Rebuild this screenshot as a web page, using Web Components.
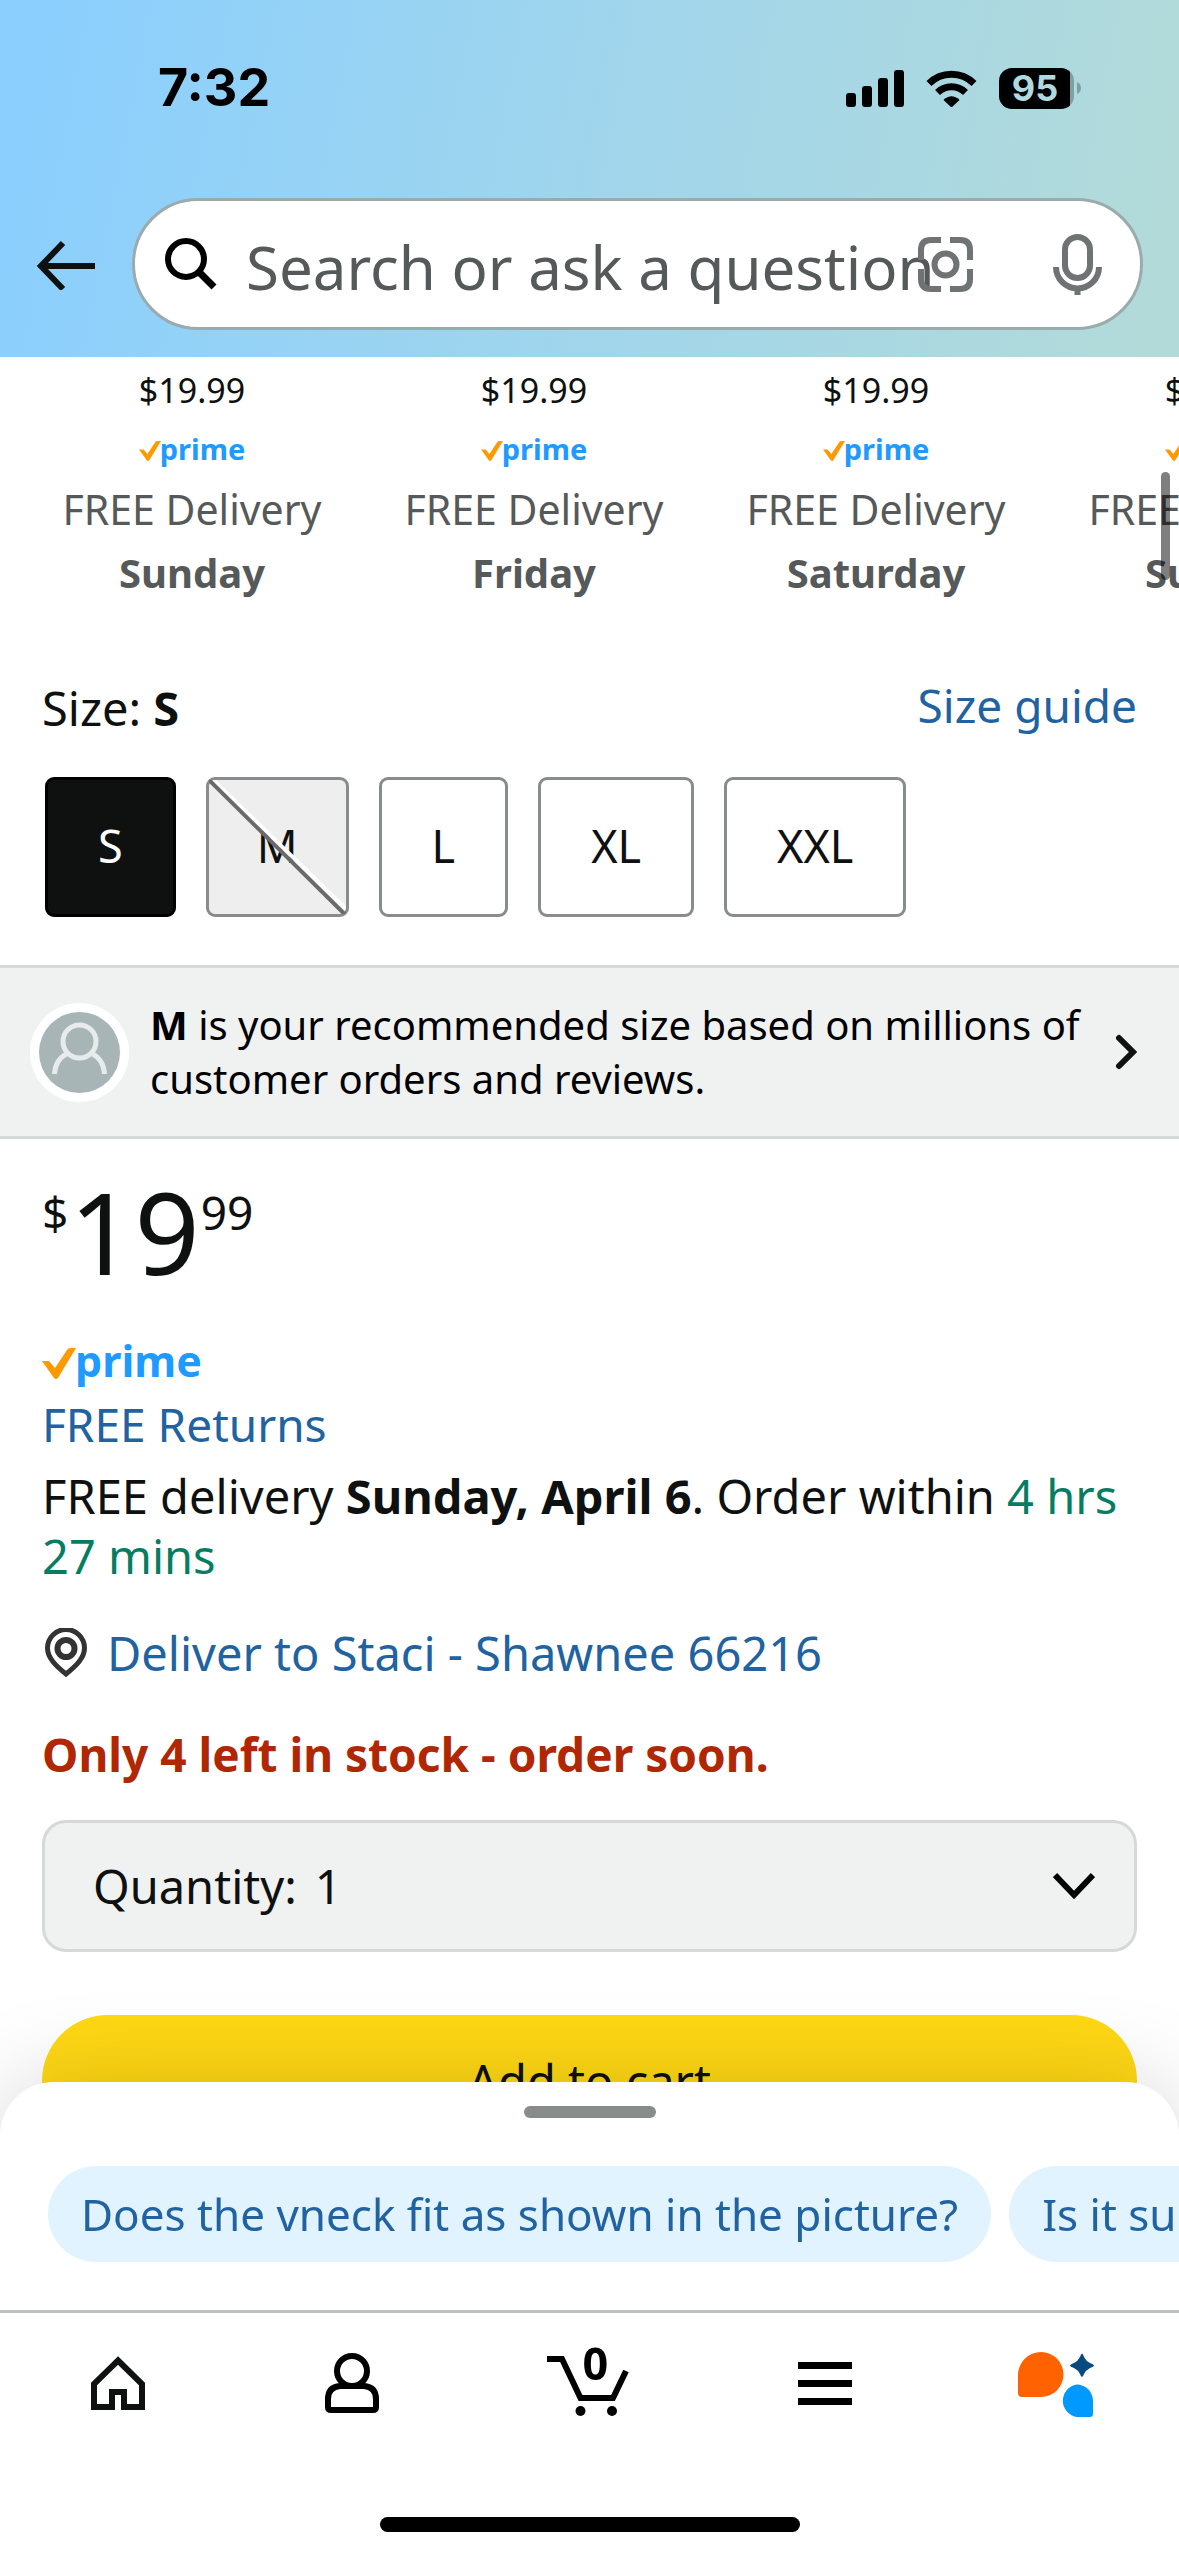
<!DOCTYPE html>
<html lang="en">
<head>
<meta charset="utf-8">
<meta name="viewport" content="width=device-width, initial-scale=1">
<title>Product details</title>
<style>
  body { margin: 0; font-family: "Noto Sans", "Open Sans", sans-serif; font-size: 47px; line-height: 60px; color: #0f1111; background: #fff; }
</style>
</head>
<body>
<app-shell>
  <app-header slot="header"></app-header>
  <swatch-strip>
    <swatch-offer price="$19.99" day="Sunday"></swatch-offer>
    <swatch-offer price="$19.99" day="Friday"></swatch-offer>
    <swatch-offer price="$19.99" day="Saturday"></swatch-offer>
    <swatch-offer price="$19.99" day="Sunday"></swatch-offer>
  </swatch-strip>
  <size-picker>
    <size-option selected>S</size-option>
    <size-option unavailable>M</size-option>
    <size-option>L</size-option>
    <size-option>XL</size-option>
    <size-option>XXL</size-option>
  </size-picker>
  <fit-banner><b>M</b> is your recommended size based on millions of customer orders and reviews.</fit-banner>
  <buy-box></buy-box>
  <scroll-thumb slot="overlay"></scroll-thumb>
  <bottom-dock slot="overlay">
    <question-chip>Does the vneck fit as shown in the picture?</question-chip>
    <question-chip>Is it suitable for work?</question-chip>
  </bottom-dock>
</app-shell>

<script>
const define = (name, render) => customElements.define(name, class extends HTMLElement {
  constructor() { super(); this.attachShadow({ mode: 'open' }); }
  connectedCallback() {
    this.shadowRoot.innerHTML = '<style>*{box-sizing:border-box}svg{display:block;flex:none}button{font:inherit;color:inherit;border:0;padding:0;margin:0;background:none}a{color:#2162a1;text-decoration:none}</style>' + render(this);
  }
});

define('app-shell', () => `
  <style>
    :host { display: flex; flex-direction: column; height: 100vh; overflow: hidden; }
    main { flex: 1; min-height: 0; overflow: hidden; }
  </style>
  <slot name="header"></slot><main><slot></slot></main><slot name="overlay"></slot>`);

define('status-bar', () => `
  <style>
    :host { display: flex; align-items: center; justify-content: space-between; height: 68px; padding: 0 98px 0 158px; color: #000; font: 700 52px/68px Inter, sans-serif; }
    .icons { display: flex; align-items: center; gap: 22px; }
    .battery { display: flex; align-items: center; gap: 3px; }
    .cell { width: 75px; height: 41px; border-radius: 13px; background: linear-gradient(90deg, #000 71px, #7f9fa3 71px); color: #b0dadf; font-size: 36px; line-height: 41px; text-align: center; padding-right: 3px; }
  </style>
  <time>7:32</time>
  <div class="icons">
    <svg width="58" height="37" viewBox="0 0 58 37"><rect y="23" width="10" height="14" rx="3"/><rect x="16" y="16" width="10" height="21" rx="3"/><rect x="32" y="8" width="10" height="29" rx="3"/><rect x="48" width="10" height="37" rx="3"/></svg>
    <svg width="51" height="37" viewBox="0 0 51 37"><g fill="none" stroke="#000" stroke-width="7"><path d="M3 13.500A32 32 0 0 1 48 13.500"/><path d="M11.500 22.500A20 20 0 0 1 39.500 22.500"/></g><path d="M17.500 30Q25.500 22.500 33.500 30L25.500 37.500Z"/></svg>
    <div class="battery"><div class="cell">95</div><svg width="4" height="12" viewBox="0 0 4 12"><path d="M0 0Q4 2 4 6T0 12Z" fill="#7f9fa3"/></svg></div>
  </div>`);

define('search-field', () => `
  <style>
    :host { flex: 1; min-width: 0; position: relative; display: flex; align-items: center; gap: 29px; height: 132px; padding-left: 30px; border: 3px solid #9aabab; border-radius: 66px; background: #fff; box-sizing: border-box; overflow: hidden; }
    input { flex: 1; min-width: 0; height: 126px; margin: 0; padding: 6px 0 0; border: 0; outline: 0; background: none; font: inherit; font-size: 60px; color: #0f1111; }
    input::placeholder { color: #565959; opacity: 1; }
    .tools { position: absolute; right: 38px; top: 0; bottom: 0; display: flex; align-items: center; gap: 80px; }
  </style>
  <svg width="52" height="52" viewBox="0 0 52 52" fill="none" stroke="#000"><circle cx="21" cy="21" r="18" stroke-width="6"/><path d="M34 34L49 49" stroke-width="7"/></svg>
  <input type="search" aria-label="Search" placeholder="Search or ask a question">
  <div class="tools">
    <button aria-label="Search with camera"><svg width="55" height="55" viewBox="0 0 55 55" fill="none" stroke="#6f7373" stroke-width="6"><path d="M23 3H13Q3 3 3 13V23M32 3H42Q52 3 52 13V23M52 32V42Q52 52 42 52H32M23 52H13Q3 52 3 42V32"/><circle cx="27.500" cy="27.500" r="11"/></svg></button>
    <button aria-label="Search by voice"><svg width="49" height="61" viewBox="0 0 49 61" fill="none" stroke="#6f7373" stroke-width="6"><rect x="12" y="3" width="25" height="41" rx="12.500"/><path d="M3 33A21.500 21.500 0 0 0 46 33M24.500 54V61"/></svg></button>
  </div>`);

define('app-header', () => `
  <style>
    :host { display: block; padding: 54px 36px 27px 37px; background: linear-gradient(101deg, #8acfff 2%, #9fd5ed 48%, #b2dad9 97%); }
    status-bar { margin: 0 -36px 76px -37px; }
    .row { display: flex; align-items: center; gap: 37px; }
  </style>
  <status-bar></status-bar>
  <div class="row">
    <button aria-label="Back"><svg width="58" height="52" viewBox="0 0 58 52" fill="none" stroke="#0f1111" stroke-width="6"><path d="M26 5L4 28L26 51M4 28H58"/></svg></button>
    <search-field></search-field>
  </div>`);

define('prime-logo', () => `
  <style>
    :host { display: flex; align-items: center; font-weight: 700; font-size: 43px; line-height: 60px; color: #1f9bff; }
    svg { width: 34px; height: 31px; margin-top: 4px; }
    span { margin-left: -1px; }
    :host([small]) { font-size: 29px; line-height: 40px; }
    :host([small]) svg { width: 22px; height: 20px; }
  </style>
  <svg viewBox="0 0 34 31"><path d="M0 13H7L13 20L25 2Q26 0 29 0H34L16 30Q14 32 12 30Z" fill="#ff9900"/></svg><span>prime</span>`);

define('swatch-strip', () => `
  <style>:host { display: flex; padding: 11px 0 74px 21px; overflow: hidden; }</style><slot></slot>`);

define('swatch-offer', el => `
  <style>
    :host { flex: none; width: 342px; display: flex; flex-direction: column; align-items: center; color: #565959; font-size: 41px; line-height: 63px; }
    .price { color: #0f1111; font-size: 34px; line-height: 44px; margin-bottom: 17px; }
    prime-logo { margin-bottom: 9px; }
    b { font-size: 40px; }
  </style>
  <span class="price">${el.getAttribute('price')}</span>
  <prime-logo small></prime-logo>
  <span>FREE Delivery</span>
  <b>${el.getAttribute('day')}</b>`);

define('size-picker', () => `
  <style>
    :host { display: block; padding: 0 42px 48px; margin-top: -3px; }
    .head { display: flex; justify-content: space-between; align-items: flex-start; margin-bottom: 36px; }
    .label { line-height: 66px; }
    a { font-size: 46px; }
    .options { display: flex; gap: 30px; padding-left: 3px; }
  </style>
  <div class="head"><span class="label">Size: <b>S</b></span><a href="#size-guide">Size guide</a></div>
  <div class="options"><slot></slot></div>`);

define('size-option', el => `
  <style>
    :host { display: block; }
    button { position: relative; display: block; height: 140px; padding: 0 50px 2px; border: 3px solid #888c8c; border-radius: 9px; background: #fff; font-size: 45px; line-height: 58px; }
    :host([selected]) button { background: #0f1111; border-color: #000; color: #fff; }
    :host([unavailable]) button { background: #eee; padding: 0 48px 2px; }
    svg { position: absolute; left: 0; top: 0; width: 100%; height: 100%; }
  </style>
  <button aria-pressed="${el.hasAttribute('selected')}"><slot></slot>${el.hasAttribute('unavailable') ? '<svg viewBox="0 0 100 100" preserveAspectRatio="none"><g fill="none" stroke-width="4"><path d="M3 0L100 96" stroke="#fff" vector-effect="non-scaling-stroke"/><path d="M0 0L99 100" stroke="#6a6a6a" vector-effect="non-scaling-stroke"/></g></svg>' : ''}</button>`);

define('fit-banner', () => `
  <style>
    :host { display: block; border: solid #d5d9d9; border-width: 3px 0; background: #f0f2f2; color: #000; }
    button { display: flex; align-items: center; width: 100%; height: 168px; padding: 0 42px 0 30px; gap: 21px; text-align: left; font-size: 40px; line-height: 54px; }
    span { flex: 1; }
  </style>
  <button>
    <svg width="99" height="99" viewBox="0 0 99 99"><circle cx="49.500" cy="49.500" r="49.500" fill="#fff"/><circle cx="49.500" cy="49.500" r="40.500" fill="#a8b5b6"/><g fill="none" stroke="#e6ebeb" stroke-width="5"><circle cx="49.500" cy="38.500" r="16.500"/><path d="M24.500 71C25 61 30 54 38 50M74.500 71C74 61 69 54 61 50"/></g></svg>
    <span><slot></slot></span>
    <svg width="22" height="36" viewBox="0 0 22 36" fill="none" stroke="#0f1111" stroke-width="6" stroke-linecap="round"><path d="M4 4L18 18L4 32"/></svg>
  </button>`);

define('price-tag', () => `
  <style>
    :host { display: flex; align-items: flex-start; gap: 1px; font-size: 114px; line-height: 130px; }
    small { font-size: 46px; line-height: 60px; padding-top: 16px; }
  </style>
  <small>$</small><span>19</span><small>99</small>`);

define('quantity-select', () => `
  <style>
    :host { position: relative; display: flex; align-items: center; height: 132px; border: 3px solid #d5d9d9; border-radius: 24px; background: #f0f2f2; box-sizing: border-box; padding: 0 39px 0 48px; }
    label { margin-right: 18px; }
    select { flex: 1; align-self: stretch; appearance: none; border: 0; margin: 0; padding: 0; outline: 0; background: none; font: inherit; color: inherit; }
  </style>
  <label for="qty">Quantity:</label>
  <select id="qty"><option>1</option><option>2</option><option>3</option><option>4</option></select>
  <svg width="42" height="28" viewBox="0 0 42 28" fill="none" stroke="#000" stroke-width="6"><path d="M2 3L21 23L40 3"/></svg>`);

define('buy-box', () => `
  <style>
    :host { display: flex; flex-direction: column; padding: 27px 42px 0; }
    prime-logo { margin: 35px 0 3px; }
    p { margin: 12px 0 37px; }
    .time { color: #067d62; }
    .returns { font-size: 46px; }
    .place { display: flex; align-items: center; gap: 19px; margin-bottom: 41px; }
    .stock { color: #b12704; font-size: 46px; margin-bottom: 36px; }
    quantity-select { margin-bottom: 63px; }
    .cart { height: 132px; border-radius: 66px; background: #ffd814; }
  </style>
  <price-tag></price-tag>
  <prime-logo></prime-logo>
  <a class="returns" href="#returns">FREE Returns</a>
  <p>FREE delivery <b>Sunday, April 6</b>. Order within <span class="time">4 hrs 27 mins</span></p>
  <a class="place" href="#address"><svg width="46" height="50" viewBox="0 0 46 50" fill="none" stroke="#333"><path d="M24 46C14 38 5.500 30 5.500 20A18.500 18.500 0 0 1 42.500 20C42.500 30 34 38 24 46Z" stroke-width="5"/><circle cx="24" cy="20.500" r="8.500" stroke-width="6"/></svg><span>Deliver to Staci - Shawnee 66216</span></a>
  <b class="stock">Only 4 left in stock - order soon.</b>
  <quantity-select></quantity-select>
  <button class="cart">Add to cart</button>`);

define('scroll-thumb', () => `
  <style>:host { position: fixed; right: 9px; top: 472px; width: 9px; height: 108px; border-radius: 5px; background: rgba(0,0,0,.5); }</style>`);

define('question-chip', () => `
  <style>
    :host { flex: none; }
    button { display: block; height: 96px; padding: 0 33px; border-radius: 48px; background: #e0f3ff; color: #2162a1; font-size: 44px; white-space: nowrap; }
  </style>
  <button><slot></slot></button>`);

define('tab-bar', () => `
  <style>
    :host { display: block; height: 246px; border-top: 3px solid #bbc0c1; background: #fff; box-sizing: border-box; }
    nav { display: flex; padding-top: 33px; height: 204px; }
    a { flex: 1; display: flex; justify-content: center; align-items: flex-start; color: #000; }
    .cart { position: relative; width: 96px; }
    .count { position: absolute; left: 32px; top: -5px; width: 44px; text-align: center; font-size: 45px; line-height: 44px; font-weight: 700; }
    .home { width: 420px; height: 15px; border-radius: 8px; background: #000; margin: 0 auto; }
  </style>
  <nav>
    <a href="#home" aria-label="Home"><svg width="96" height="72" viewBox="0 0 96 72" fill="none" stroke="#0f1111" stroke-width="6"><path d="M48 14.500L72 38V61H54V46H42V61H24V38Z"/></svg></a>
    <a href="#account" aria-label="Account"><svg width="96" height="72" viewBox="0 0 96 72" fill="none" stroke="#000" stroke-width="6"><circle cx="46" cy="25" r="15"/><path d="M34 40H58Q70 41 70 53V61Q70 64 67 64H25Q22 64 22 61V53Q22 41 34 40Z"/></svg></a>
    <a href="#cart" aria-label="Cart"><span class="cart"><svg width="96" height="72" viewBox="0 0 96 72"><path d="M6 13H21L39.500 52H72L85 25" fill="none" stroke="#000" stroke-width="6"/><circle cx="39.500" cy="65" r="5"/><circle cx="71" cy="65" r="5"/></svg><b class="count">0</b></span></a>
    <a href="#menu" aria-label="Menu"><svg width="96" height="72" viewBox="0 0 96 72"><path d="M21 16H75V23H21ZM21 34H75V41H21ZM21 52H75V59H21Z"/></svg></a>
    <a href="#assistant" aria-label="Assistant"><svg width="96" height="72" viewBox="0 0 96 72"><path d="M28 6A22.500 22.500 0 0 1 28 51H9Q5 51 5 47V29A23 23 0 0 1 28 6Z" fill="#ff6200"/><path d="M63.500 38.500A16.500 16.500 0 0 1 80 55V68Q80 71 77 71H63.500A16.500 16.500 0 0 1 63.500 38.500Z" fill="#0099ff"/><path d="M69 7.500Q70 7.500 71 11Q73 15 77 17Q81 18.500 81 19.500Q81 20.500 77 22Q73 24 71 28Q70 31 69 31Q68 31 67 28Q65 24 61 22Q57 20.500 57 19.500Q57 18.500 61 17Q65 15 67 11Q68 7.500 69 7.500Z" fill="#084a80"/></svg></a>
  </nav>
  <div class="home"></div>`);

define('bottom-dock', () => `
  <style>
    :host { position: fixed; left: 0; right: 0; bottom: 0; display: block; background: #fff; border-radius: 54px 54px 0 0; box-shadow: 0 0 96px rgba(0,0,0,.16); }
    .handle { width: 132px; height: 12px; border-radius: 6px; background: #888c8c; margin: 0 auto 48px; }
    .sheet { padding-top: 24px; }
    .chips { display: flex; gap: 18px; padding: 0 0 48px 48px; overflow: hidden; }
  </style>
  <div class="sheet"><div class="handle"></div><div class="chips"><slot></slot></div></div>
  <tab-bar></tab-bar>`);
</script>
</body>
</html>
